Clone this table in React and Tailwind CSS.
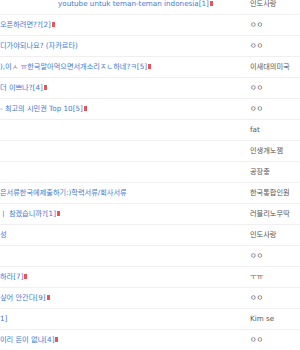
import React from 'react'

// board list rows: title (shifted/cut at the left), reply count, author
const rows = [
  { title: 'youtube untuk teman-teman indonesia', count: 1, author: '인도사랑', offset: 'pl-[58px]' },
  { title: '오픈하려면??', count: 2, author: 'ㅇㅇ', offset: 'pl-0' },
  { title: '디가야되나요? (자카르타)', count: null, author: 'ㅇㅇ', offset: 'pl-0' },
  { title: '),이ㅅ ㅠ한국말아먹으면서개소리ㅈㄴ하네?ㅋ', count: 5, author: '이새대의미국', offset: 'pl-0' },
  { title: '더 이쁘나?', count: 4, author: 'ㅇㅇ', offset: 'pl-0' },
  { title: '- 최고의 시민권 Top 10', count: 5, author: 'ㅇㅇ', offset: 'pl-0' },
  { title: '', count: null, author: 'fat', offset: 'pl-0' },
  { title: '', count: null, author: '인생개노잼', offset: 'pl-0' },
  { title: '', count: null, author: '공장충', offset: 'pl-0' },
  { title: '은서류한국에제출하기:)학력서류/회사서류', count: null, author: '한국통합인원', offset: 'pl-0' },
  { title: 'ㅣ 참겠습니까?', count: 1, author: '러블리노무딱', offset: 'pl-0' },
  { title: '성', count: null, author: '인도사랑', offset: 'pl-0' },
  { title: '', count: null, author: 'ㅇㅇ', offset: 'pl-0' },
  { title: '하라', count: 7, author: 'ㅜㅠ', offset: 'pl-0' },
  { title: '싶어 안간다', count: 9, author: 'ㅇㅇ', offset: 'pl-0' },
  { title: '', tail: '1]', count: null, author: 'Kim se', offset: 'pl-0' },
  { title: '이리 돈이 없냐', count: 4, author: 'ㅇㅇ', offset: 'pl-0' },
]

function NewIcon() {
  return <span className="inline-block w-[3px] h-[5px] bg-[#ec5258] ml-[1px] align-middle" />
}

export default function App() {
  return (
    <div
      className="w-[300px] h-[350px] overflow-hidden bg-white text-[7.2px]"
      style={{ fontFamily: '"DejaVu Sans", "Noto Sans CJK KR", sans-serif' }}
    >
      <div className="mt-[-6px]">
        {rows.map((r, i) => (
          <div key={i} className="flex items-center h-[21px] border-b border-[#efefef]">
            <div className={`flex-1 overflow-hidden whitespace-nowrap text-[#4479d6] ${r.offset}`}>
              {r.title}
              {r.tail}
              {r.count !== null && <span>[{r.count}]</span>}
              {r.count !== null && <NewIcon />}
            </div>
            <div className="w-[50px] shrink-0 whitespace-nowrap text-[#555]">{r.author}</div>
          </div>
        ))}
      </div>
    </div>
  )
}
